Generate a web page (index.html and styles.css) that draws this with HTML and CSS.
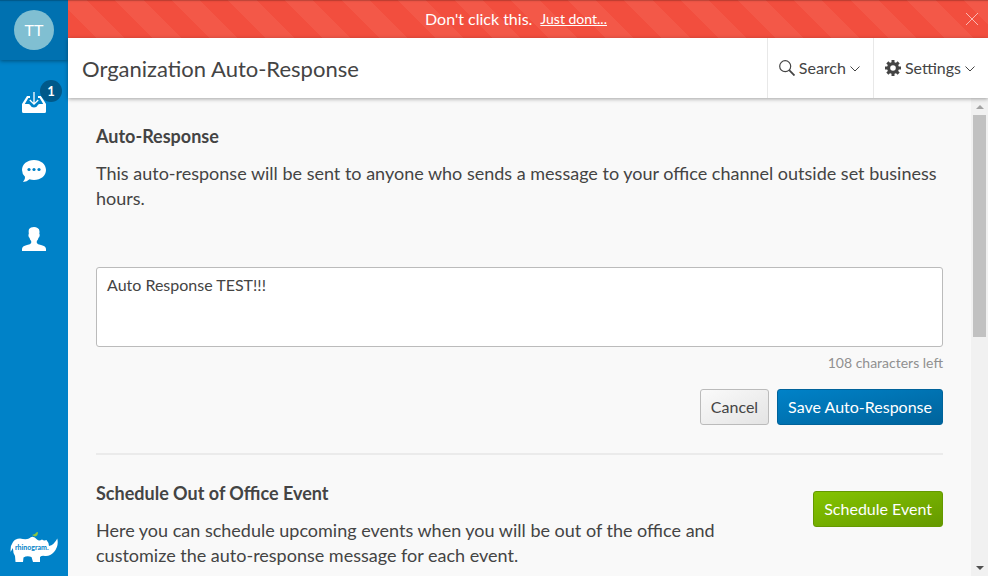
FILE: index.html
```html
<!DOCTYPE html>
<html lang="en">
<head>
<meta charset="utf-8">
<title>Organization Auto-Response</title>
<link rel="stylesheet" href="styles.css">
</head>
<body>
<div class="app">
  <nav class="sidebar" aria-label="Main">
    <div class="profile"><button class="avatar" type="button">TT</button></div>
    <a class="nav-item" href="#inbox" aria-label="Inbox">
      <svg width="24" height="22" viewBox="0 0 24 22"><path fill="#fff" d="M5 4H8V6H6.300L2.800 12H6.500Q8 12 8.500 13.500Q9.200 15.500 12 15.500T15.500 13.500Q16 12 17.500 12H21.200L17.700 6H16V4H19L24 12V19.500Q24 21 22.500 21H1.500Q0 21 0 19.500V12Z"/><path d="M12 0V12M7.800 8L12 12.200L16.200 8" fill="none" stroke="#fff" stroke-width="1.300"/></svg>
      <span class="badge">1</span>
    </a>
    <a class="nav-item" href="#messages" aria-label="Messages">
      <svg width="24" height="22" viewBox="0 0 24 22"><path fill="#fff" d="M12 0C18.800 0 24 4.200 24 10S18.800 20 12 20Q9.500 20 7.500 19.300Q5 21.800 1 22Q3.500 19.500 3 16.800Q0 14 0 10C0 4.200 5.200 0 12 0Z"/><g fill="#0082c8"><circle cx="7" cy="9.500" r="1.600"/><circle cx="12" cy="9.500" r="1.600"/><circle cx="17" cy="9.500" r="1.600"/></g></svg>
    </a>
    <a class="nav-item" href="#contacts" aria-label="Contacts">
      <svg width="24" height="24" viewBox="0 0 24 24"><path fill="#fff" d="M12 0Q14 0 15.500 1Q17.500 1.500 17.500 4.500Q17.500 6 17.300 7Q18 7.200 17.600 9Q17.200 10.500 16.500 10.800Q16 13 14.800 14V16Q15.500 17.300 19 18Q24 19 24 22V24H0V22Q0 19 5 18Q8.500 17.300 9.200 16V14Q8 13 7.500 10.800Q6.800 10.500 6.500 9Q6.200 7.300 6.800 7Q6.300 4 7 2Q8.500 0 12 0Z"/></svg>
    </a>
    <a class="brand" href="#home" aria-label="Rhinogram">
      <svg width="48" height="32" viewBox="0 0 48 32"><path fill="#fff" d="M.7 20Q0 14 3 10Q5 6.700 10 6.500Q16 8 19 6.500Q23 2.500 27 7.500Q29 9.500 32 7.500Q34 9 36.500 8Q38.500 10 39 14Q44 13 47.300 6.500Q49 14 44 20Q40 24.500 35 24Q32 23 30 25V30H23L21.500 25Q17 23.500 13.500 25.500L13 30H5.500L5 24Q2.800 21 3 16Q1.500 18 .7 20Z"/><path fill="#8cc63f" d="M22 3L25 2Q26 0 28 0Q28 4 25 4.500Z"/><text class="brand-text" x="5" y="18">rhinogram.</text></svg>
    </a>
  </nav>
  <div class="main">
    <div class="banner">
      <span>Don't click this.</span><a href="#dont">Just dont...</a>
      <button class="close" type="button" aria-label="Close"><svg width="12" height="12" viewBox="0 0 12 12"><path d="M0 0L12 12M12 0L0 12" fill="none" stroke="#fff"/></svg></button>
    </div>
    <header class="header">
      <h1>Organization Auto-Response</h1>
      <button class="menu" type="button"><svg width="16" height="16" viewBox="0 0 16 16" fill="none" stroke="#444"><circle cx="6.200" cy="6.200" r="5.500" stroke-width="1.200"/><path d="M10.200 10.200L15.500 15.500" stroke-width="1.800"/></svg><span>Search</span><svg width="10" height="8" viewBox="0 0 10 8"><path d="M.5 2.500L5 7L9.500 2.500" fill="none" stroke="#444"/></svg></button>
      <button class="menu" type="button"><svg width="16" height="16" viewBox="0 0 16 16"><g fill="#444"><path id="tooth" d="M6.500 0H9.500V16H6.500Z"/><use href="#tooth" transform="rotate(45 8 8)"/><use href="#tooth" transform="rotate(90 8 8)"/><use href="#tooth" transform="rotate(135 8 8)"/><circle cx="8" cy="8" r="6"/></g><circle cx="8" cy="8" r="2.800" fill="#fff"/></svg><span>Settings</span><svg width="10" height="8" viewBox="0 0 10 8"><path d="M.5 2.500L5 7L9.500 2.500" fill="none" stroke="#444"/></svg></button>
    </header>
    <div class="body">
      <main class="content">
        <section class="response">
          <h2><label for="message">Auto-Response</label></h2>
          <p>This auto-response will be sent to anyone who sends a message to your office channel outside set business hours.</p>
          <textarea id="message">Auto Response TEST!!!</textarea>
          <div class="count">108 characters left</div>
          <div class="actions"><button class="btn" type="button">Cancel</button><button class="btn primary" type="button">Save Auto-Response</button></div>
        </section>
        <section class="schedule">
          <div class="schedule-text">
            <h2>Schedule Out of Office Event</h2>
            <p>Here you can schedule upcoming events when you will be out of the office and customize the auto-response message for each event.</p>
          </div>
          <button class="btn success" type="button">Schedule Event</button>
        </section>
      </main>
      <div class="scrollbar" aria-hidden="true"><i class="arrow up"></i><div class="track"><div class="thumb"></div></div><i class="arrow down"></i></div>
    </div>
  </div>
</div>
</body>
</html>
```
FILE: styles.css
```css
* { box-sizing: border-box; }
body { margin: 0; font: 16px/24px Lato, sans-serif; color: #444; }
button { font: inherit; color: inherit; cursor: pointer; }
h1, h2, p { margin: 0; }
svg { display: block; flex: none; }
.app { display: flex; height: 100vh; overflow: hidden; position: relative; }
.app::before { content: ""; position: absolute; inset: 0 0 auto; height: 1px; background: rgba(0, 0, 0, .2); box-shadow: 0 0 2px rgba(0, 0, 0, .2); z-index: 2; }

.sidebar { flex: none; width: 68px; background: #0082c8; display: flex; flex-direction: column; align-items: center; }
.profile { align-self: stretch; height: 60px; margin-bottom: 9px; background: #0071b0; box-shadow: 0 1px 4px rgba(0, 0, 0, .4); display: flex; justify-content: center; align-items: center; }
.avatar { width: 40px; height: 40px; padding: 0; border: 0; border-radius: 50%; background: #80bfd2; color: #fff; }
.nav-item { position: relative; width: 68px; height: 68px; display: flex; align-items: center; justify-content: center; }
.badge { position: absolute; top: 11px; right: 6px; width: 22px; height: 22px; border-radius: 50%; background: #00598a; color: #fff; font-size: 13px; font-weight: 700; line-height: 22px; text-align: center; }
.brand { margin-top: auto; margin-bottom: 12px; }
.brand-text { font: 700 7px Lato, sans-serif; fill: #0082c8; }

.main { flex: 1; min-width: 0; display: flex; flex-direction: column; }
.banner { flex: none; height: 38px; padding-right: 24px; position: relative; display: flex; align-items: center; justify-content: center; gap: 8px; color: #fff; background: repeating-linear-gradient(45deg, #f24e3e 0 20px, #f35848 20px 40px); }
.banner a { color: inherit; font-size: 14px; }
.close { position: absolute; right: 4px; top: 7px; padding: 6px; border: 0; background: none; opacity: .6; }
.header { flex: none; height: 60px; position: relative; z-index: 1; background: #fff; box-shadow: 0 1px 4px rgba(0, 0, 0, .35); display: flex; }
.header h1 { flex: 1; padding-left: 14px; font-size: 22px; font-weight: 400; line-height: 62px; }
.menu { display: flex; align-items: center; gap: 4px; padding: 0 13px 0 11px; border: 0; border-left: 1px solid #e8e8e8; background: none; }

.body { flex: 1; min-height: 0; display: flex; background: #f9f9f9; }
.content { flex: 1; min-width: 0; overflow: hidden; padding: 26px 28px 0; }
h2 { font-size: 18px; line-height: 24px; margin-bottom: 13px; }
p { font-size: 18px; line-height: 25px; }
.response { padding-bottom: 28px; border-bottom: 2px solid #ebebeb; }
textarea { display: block; width: 100%; height: 80px; margin-top: 56px; padding: 5px 10px; border: 1px solid #bbb; border-radius: 3px; background: #fff; color: inherit; font: inherit; resize: none; outline: 0; }
.count { margin-top: 4px; font-size: 14px; color: #909090; text-align: right; }
.actions { display: flex; justify-content: flex-end; gap: 8px; margin-top: 14px; }
.btn { flex: none; height: 36px; padding: 0 10px; border: 1px solid #bbb; border-radius: 3px; background: linear-gradient(to bottom right, #fafafa, #e4e4e4); }
.primary { color: #fff; border-color: #00639b; background: linear-gradient(to bottom right, #0082c8, #00639b); }
.success { color: #fff; border-color: #659900; background: linear-gradient(to bottom right, #84c400, #659900); }
.schedule { display: flex; justify-content: space-between; align-items: flex-start; padding-top: 26px; }
.schedule .btn { margin-top: 10px; }
.schedule-text { max-width: 640px; }

.scrollbar { flex: none; width: 17px; background: #f1f1f1; display: flex; flex-direction: column; align-items: center; }
.arrow { height: 17px; display: flex; align-items: center; }
.arrow::before { content: ""; border: 4px solid transparent; }
.up::before { border-top: 0; border-bottom-color: #a3a3a3; }
.down::before { border-bottom: 0; border-top-color: #505050; }
.track { flex: 1; }
.thumb { width: 13px; height: 50%; background: #c1c1c1; }
```
